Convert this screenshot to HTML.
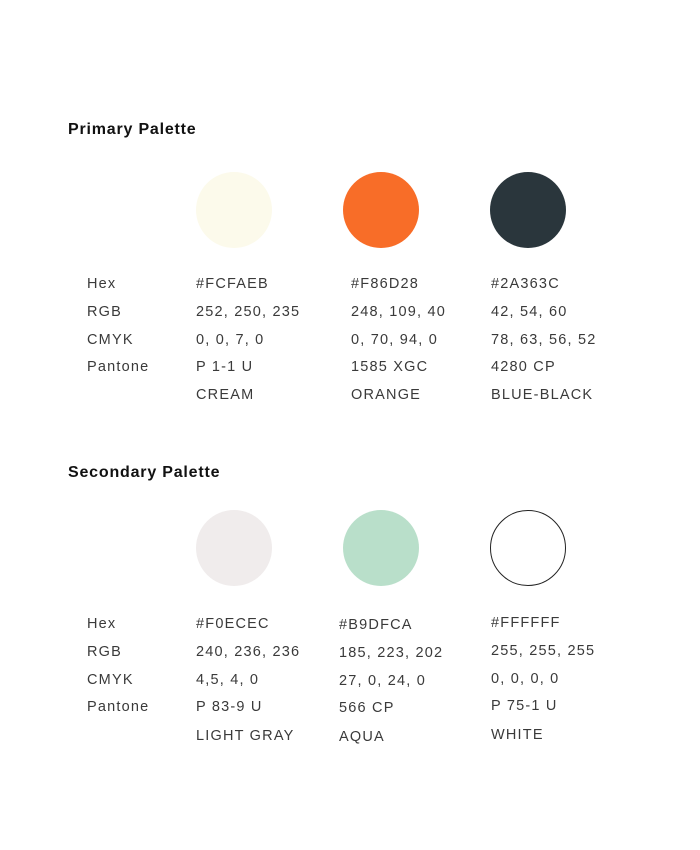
<!DOCTYPE html>
<html><head><meta charset="utf-8"><style>
body{margin:0;width:700px;height:850px;background:#fff;position:relative;font-family:"Liberation Sans",sans-serif;color:#222;overflow:hidden}
.h{position:absolute;font-weight:bold;font-size:16px;letter-spacing:0.8px;color:#111}
.c{position:absolute;width:76px;height:76px;border-radius:50%}
.t{position:absolute;font-size:14.5px;letter-spacing:1.2px;line-height:16px;color:#3a3a3a;white-space:nowrap}
</style></head><body>
<div class="h" style="left:68px;top:121px">Primary Palette</div>
<div class="c" style="left:196px;top:172px;background:#FCFAEB"></div>
<div class="c" style="left:343px;top:172px;background:#F86D28"></div>
<div class="c" style="left:490px;top:172px;background:#2A363C"></div>
<div class="t" style="left:87px;top:276px">Hex</div>
<div class="t" style="left:87px;top:304px">RGB</div>
<div class="t" style="left:87px;top:332px">CMYK</div>
<div class="t" style="left:87px;top:359px">Pantone</div>
<div class="t" style="left:196px;top:276px">#FCFAEB</div>
<div class="t" style="left:196px;top:304px">252, 250, 235</div>
<div class="t" style="left:196px;top:332px">0, 0, 7, 0</div>
<div class="t" style="left:196px;top:359px">P 1-1 U</div>
<div class="t" style="left:196px;top:387px">CREAM</div>
<div class="t" style="left:351px;top:276px">#F86D28</div>
<div class="t" style="left:351px;top:304px">248, 109, 40</div>
<div class="t" style="left:351px;top:332px">0, 70, 94, 0</div>
<div class="t" style="left:351px;top:359px">1585 XGC</div>
<div class="t" style="left:351px;top:387px">ORANGE</div>
<div class="t" style="left:491px;top:276px">#2A363C</div>
<div class="t" style="left:491px;top:304px">42, 54, 60</div>
<div class="t" style="left:491px;top:332px">78, 63, 56, 52</div>
<div class="t" style="left:491px;top:359px">4280 CP</div>
<div class="t" style="left:491px;top:387px">BLUE-BLACK</div>

<div class="h" style="left:68px;top:464px">Secondary Palette</div>
<div class="c" style="left:196px;top:510px;background:#F0ECEC"></div>
<div class="c" style="left:343px;top:510px;background:#B9DFCA"></div>
<div class="c" style="left:490px;top:510px;background:#fff;border:1px solid #222;box-sizing:border-box"></div>
<div class="t" style="left:87px;top:616px">Hex</div>
<div class="t" style="left:87px;top:644px">RGB</div>
<div class="t" style="left:87px;top:672px">CMYK</div>
<div class="t" style="left:87px;top:699px">Pantone</div>
<div class="t" style="left:196px;top:616px">#F0ECEC</div>
<div class="t" style="left:196px;top:644px">240, 236, 236</div>
<div class="t" style="left:196px;top:672px">4,5, 4, 0</div>
<div class="t" style="left:196px;top:699px">P 83-9 U</div>
<div class="t" style="left:196px;top:728px">LIGHT GRAY</div>
<div class="t" style="left:339px;top:617px">#B9DFCA</div>
<div class="t" style="left:339px;top:645px">185, 223, 202</div>
<div class="t" style="left:339px;top:673px">27, 0, 24, 0</div>
<div class="t" style="left:339px;top:700px">566 CP</div>
<div class="t" style="left:339px;top:729px">AQUA</div>
<div class="t" style="left:491px;top:615px">#FFFFFF</div>
<div class="t" style="left:491px;top:643px">255, 255, 255</div>
<div class="t" style="left:491px;top:671px">0, 0, 0, 0</div>
<div class="t" style="left:491px;top:698px">P 75-1 U</div>
<div class="t" style="left:491px;top:727px">WHITE</div>
</body></html>
